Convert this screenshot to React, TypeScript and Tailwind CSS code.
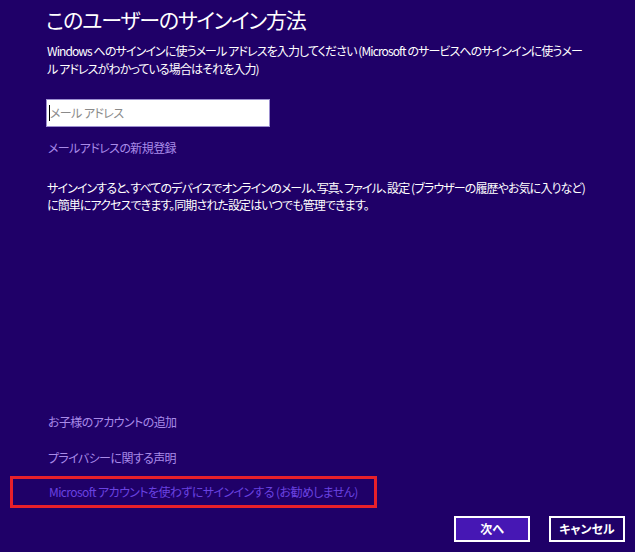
import React from 'react';

const jp = "[font-family:'Noto_Sans_CJK_JP',sans-serif] [font-feature-settings:'palt']";
const txt = 'text-[12px] leading-[18px] tracking-[-0.6px]';

const App: React.FC = () => {
  return (
    <div className={`w-[635px] h-[552px] bg-[#1f0068] text-white overflow-hidden flex flex-col ${jp}`}>
      <h1 className="ml-[46px] mt-[4px] text-[21px] leading-[30px] tracking-[-1.2px] font-normal whitespace-nowrap">
        このユーザーのサインイン方法
      </h1>
      <p className="ml-[47px] mt-[8px] text-[12px] leading-[18px] tracking-[-0.9px] whitespace-nowrap">
        Windows へのサインインに使うメール アドレスを入力してください (Microsoft のサービスへのサインインに使うメー
        <br />
        ル アドレスがわかっている場合はそれを入力)
      </p>
      <div className="ml-[46px] mt-[21px] w-[224px] h-[28px] bg-white border border-[#9c8fd0] flex items-center px-[2px]">
        <span className="w-px h-[16px] bg-black" />
        <span className="text-[12px] text-[#8a8a8a] tracking-[-0.6px]">メール アドレス</span>
      </div>
      <a className={`ml-[48px] mt-[12px] ${txt} text-[#a98be8]`}>
        メールアドレスの新規登録
      </a>
      <p className="ml-[47px] mt-[22px] text-[12px] leading-[17px] tracking-[-0.9px] whitespace-nowrap">
        サインインすると、すべてのデバイスでオンラインのメール、写真、ファイル、設定 (ブラウザーの履歴やお気に入りなど)
        <br />
        に簡単にアクセスできます。同期された設定はいつでも管理できます。
      </p>

      <div className="mt-auto flex flex-col">
        <a className={`ml-[48px] ${txt} text-[#a98be8]`}>お子様のアカウントの追加</a>
        <a className={`ml-[48px] mt-[18px] ${txt} text-[#a98be8]`}>プライバシーに関する声明</a>
        <div className="ml-[10px] mt-[9px] w-[367px] h-[32px] border-[3px] border-[#e8202a] flex items-center pl-[36px]">
          <a className={`${txt} text-[#6a42e0] whitespace-nowrap`}>
            Microsoft アカウントを使わずにサインインする (お勧めしません)
          </a>
        </div>
        <div className="flex justify-end gap-[19px] mr-[10px] mt-[8px] mb-[10px]">
          <button className="w-[76px] h-[26px] bg-[#4617b4] border-2 border-white text-[12px] font-bold">次へ</button>
          <button className="w-[76px] h-[26px] bg-[#1f0068] border-2 border-white text-[12px] font-bold">キャンセル</button>
        </div>
      </div>
    </div>
  );
};

export default App;
